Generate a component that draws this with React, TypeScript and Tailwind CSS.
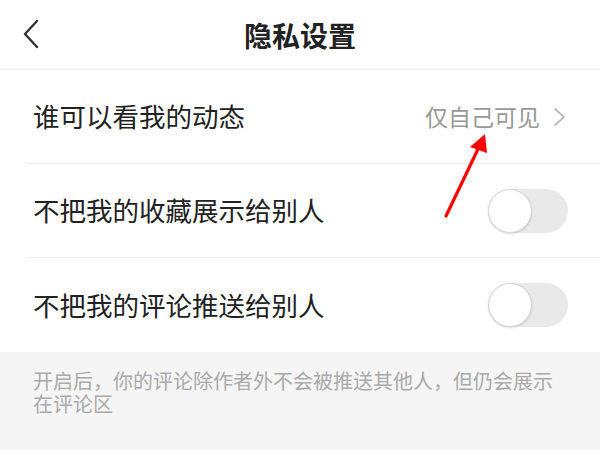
import React from "react";

const Toggle = () => (
  <div className="relative w-[80px] h-[44px] rounded-full bg-[#e9e9e9]">
    <div className="absolute left-0 top-0 w-[44px] h-[44px] rounded-full bg-white border border-[#d6d6d6] shadow-[0_1px_2px_rgba(0,0,0,0.15)]" />
  </div>
);

export default function App() {
  return (
    <div
      className="relative w-[600px] h-[450px] bg-white overflow-hidden"
      style={{ fontFamily: '"Noto Sans CJK SC", "Noto Sans", sans-serif' }}
    >
      <div className="relative h-[70px] flex items-center justify-center border-b border-[#eeeeee]">
        <svg className="absolute left-[21px] top-[19px]" width="20" height="30" viewBox="0 0 20 30">
          <path d="M16 2 L4 15 L16 28" fill="none" stroke="#333" strokeWidth="2.4" strokeLinecap="round" strokeLinejoin="round" />
        </svg>
        <div className="text-[28px] font-bold text-[#222] leading-none">隐私设置</div>
      </div>

      <div className="pl-[27px]">
        <div className="h-[94px] flex items-center border-b border-[#eeeeee] pr-[33px]">
          <div className="flex-1 pl-[6px] text-[26.5px] text-[#222] leading-none">谁可以看我的动态</div>
          <div className="text-[23px] text-[#999] leading-none">仅自己可见</div>
          <svg className="ml-[13px]" width="14" height="20" viewBox="0 0 14 20">
            <path d="M2 2 L11 10 L2 18" fill="none" stroke="#bbb" strokeWidth="1.8" strokeLinecap="round" strokeLinejoin="round" />
          </svg>
        </div>
        <div className="h-[94px] flex items-center border-b border-[#eeeeee] pr-[32px]">
          <div className="flex-1 pl-[6px] text-[26.5px] text-[#222] leading-none">不把我的收藏展示给别人</div>
          <Toggle />
        </div>
        <div className="h-[94px] flex items-center pr-[32px]">
          <div className="flex-1 pl-[6px] text-[26.5px] text-[#222] leading-none">不把我的评论推送给别人</div>
          <Toggle />
        </div>
      </div>

      <div className="h-[98px] bg-[#f5f5f5] pl-[33px] pt-[17px]">
        <div className="whitespace-nowrap text-[20px] leading-[23px] text-[#aaaaaa]">
          <div>开启后，你的评论除作者外不会被推送其他人，但仍会展示</div>
          <div>在评论区</div>
        </div>
      </div>

      <svg className="absolute left-0 top-0 pointer-events-none" width="600" height="450" viewBox="0 0 600 450">
        <line x1="446" y1="216" x2="479" y2="147" stroke="#ff0000" strokeWidth="3.2" strokeLinecap="round" />
        <polygon points="485,134 470,147 487,153" fill="#ff0000" />
      </svg>
    </div>
  );
}
